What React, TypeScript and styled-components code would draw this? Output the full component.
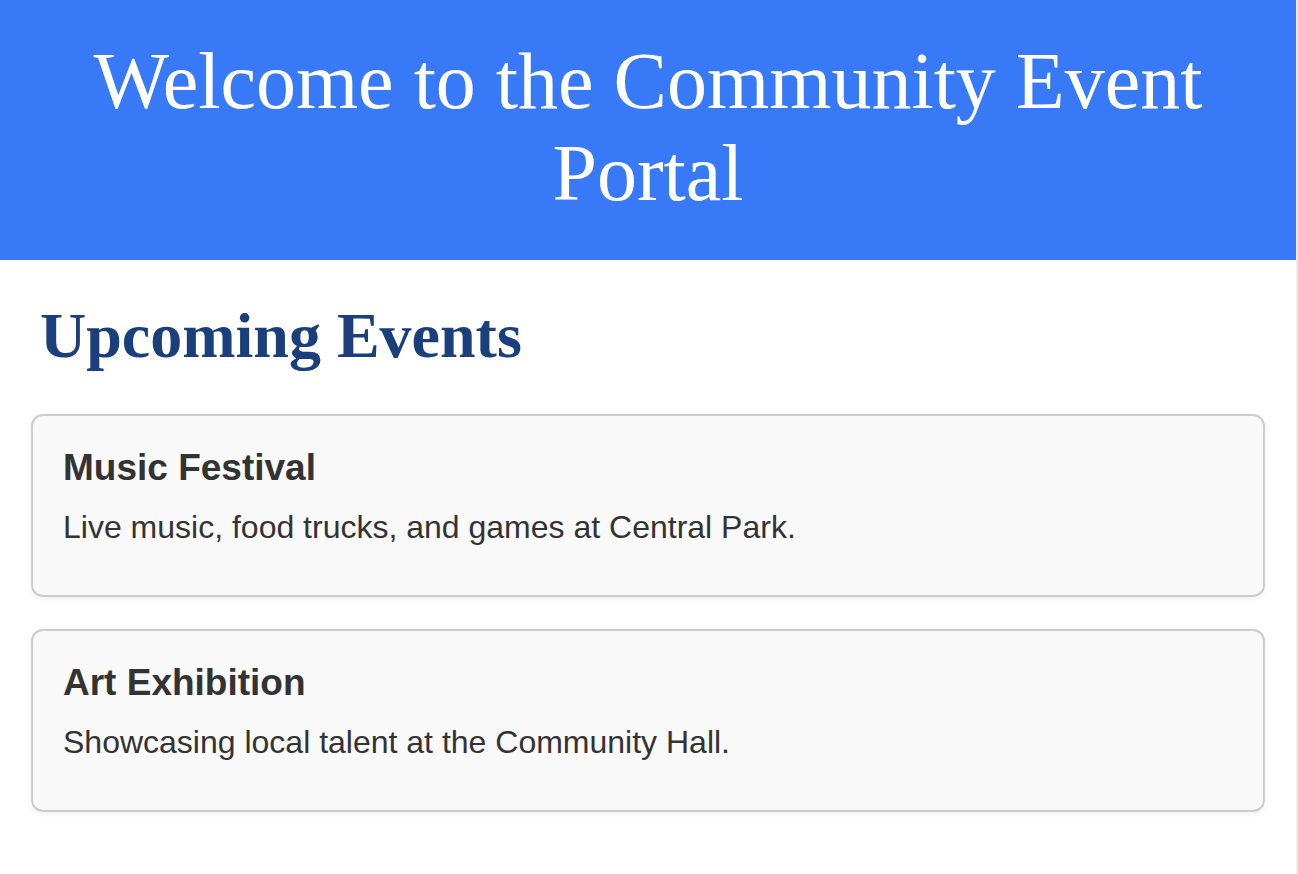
import React from "react";
import styled, { createGlobalStyle } from "styled-components";

const GlobalStyle = createGlobalStyle`
  html { background: #ececec; }
  body {
    margin: 0 2px 0 0;
    min-height: 100vh;
    background: #ffffff;
    font-family: "Liberation Sans", Arial, Helvetica, sans-serif;
    color: #333333;
  }
`;

const Header = styled.header`
  background: #3779f6;
  padding: 35px 40px 41px;
  text-align: center;
`;

const Title = styled.h1`
  margin: 0;
  font-family: "Liberation Serif", "Times New Roman", serif;
  font-weight: 400;
  font-size: 80px;
  line-height: 92px;
  color: #ffffff;
`;

const Main = styled.main`
  padding: 39px 31px 40px;
  display: flex;
  flex-direction: column;
`;

const SectionTitle = styled.h2`
  margin: 0 0 41px 9px;
  font-family: "Liberation Serif", "Times New Roman", serif;
  font-weight: 700;
  font-size: 64px;
  line-height: 74px;
  color: #1b3f7b;
`;

const List = styled.div`
  display: flex;
  flex-direction: column;
  gap: 32px;
`;

const Card = styled.article`
  background: #f9f9f9;
  border: 2px solid #cccccc;
  border-radius: 12px;
  box-shadow: 0 2px 6px rgba(0, 0, 0, 0.06);
  padding: 30px;
`;

const CardTitle = styled.h3`
  margin: 0 0 20px;
  font-size: 37px;
  line-height: 43px;
  font-weight: 700;
  color: #333333;
`;

const CardText = styled.p`
  margin: 0 0 19px;
  font-size: 32px;
  line-height: 37px;
  color: #333333;
`;

const events = [
  { title: "Music Festival", text: "Live music, food trucks, and games at Central Park." },
  { title: "Art Exhibition", text: "Showcasing local talent at the Community Hall." },
];

export default function App() {
  return (
    <>
      <GlobalStyle />
      <Header>
        <Title>Welcome to the Community Event Portal</Title>
      </Header>
      <Main>
        <SectionTitle>Upcoming Events</SectionTitle>
        <List>
          {events.map((e) => (
            <Card key={e.title}>
              <CardTitle>{e.title}</CardTitle>
              <CardText>{e.text}</CardText>
            </Card>
          ))}
        </List>
      </Main>
    </>
  );
}
